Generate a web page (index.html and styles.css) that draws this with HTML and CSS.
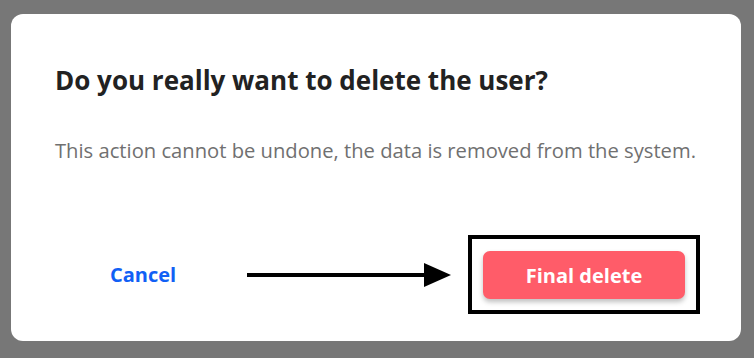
FILE: index.html
```html
<!DOCTYPE html>
<html>
<head>
<meta charset="utf-8">
<link rel="stylesheet" href="styles.css">
</head>
<body>
<div class="overlay">
  <div class="dialog">
    <h2 class="title">Do you really want to delete the user?</h2>
    <p class="message">This action cannot be undone, the data is removed from the system.</p>
    <div class="actions">
      <button class="btn-cancel">Cancel</button>
      <svg class="arrow" width="206" height="26" viewBox="0 0 206 26">
        <rect x="0" y="11" width="180" height="4" fill="#000"/>
        <polygon points="177,1 204,13 177,25" fill="#000"/>
      </svg>
      <div class="highlight">
        <button class="btn-delete">Final delete</button>
      </div>
    </div>
  </div>
</div>
</body>
</html>
```
FILE: styles.css
```css
html, body {
  margin: 0;
  padding: 0;
}
body {
  width: 754px;
  height: 358px;
  background: #777777;
  font-family: "Open Sans", Lato, sans-serif;
  overflow: hidden;
}
.overlay {
  padding: 14px 13px 17px 11px;
  height: 358px;
  box-sizing: border-box;
}
.dialog {
  background: #fff;
  border-radius: 12px;
  height: 100%;
  box-sizing: border-box;
  padding: 50px 10px 0 44px;
}
.title {
  margin: 0;
  font-size: 26px;
  font-weight: 700;
  color: #222;
  line-height: 32px;
  white-space: nowrap;
}
.message {
  margin: 42px 0 0;
  font-size: 20.2px;
  color: #707070;
  line-height: 24px;
  white-space: nowrap;
}
.actions {
  display: flex;
  align-items: center;
  margin-top: 73px;
}
.btn-cancel {
  background: none;
  border: none;
  padding: 0;
  margin-left: 55px;
  font-family: inherit;
  font-size: 20px;
  font-weight: 700;
  color: #1160f5;
  width: 70px;
  text-align: left;
}
.arrow {
  margin-left: 67px;
  display: block;
}
.highlight {
  margin-left: 15px;
  border: 4px solid #000;
  padding: 12px 11px 11px 11px;
  width: 232px;
  height: 79px;
  box-sizing: border-box;
}
.btn-delete {
  display: block;
  width: 202px;
  height: 48px;
  border: none;
  border-radius: 7px;
  background: #ff5c69;
  color: #fff;
  font-family: inherit;
  font-size: 20px;
  font-weight: 700;
  box-shadow: 0 3px 5px rgba(0,0,0,0.25);
}
```
